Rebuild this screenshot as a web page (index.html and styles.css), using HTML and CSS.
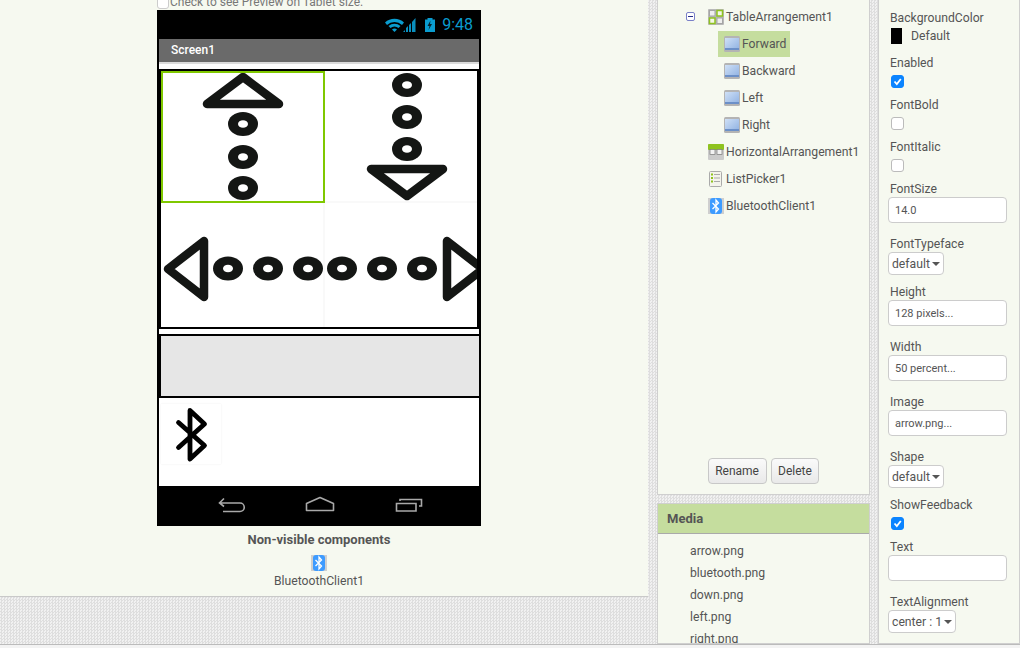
FILE: index.html
```html
<!DOCTYPE html>
<html lang="en">
<head>
  <meta charset="utf-8">
  <title>Designer</title>
  <link rel="stylesheet" href="styles.css">
</head>
<body>
<svg class="defs" width="0" height="0">
  <defs>
    <linearGradient id="btn-face" x1="0" y1="0" x2="1" y2="1">
      <stop offset="0" stop-color="#cfe0f6"/>
      <stop offset="1" stop-color="#8fb1e2"/>
    </linearGradient>
    <symbol id="ic-button" viewBox="0 0 16 16">
      <rect x="0" y="0" width="16" height="16" rx="1.500" fill="#b4b4b4"/>
      <rect x="1" y="2" width="14" height="12" fill="url(#btn-face)"/>
      <rect x="1" y="12" width="14" height="2" fill="#6c90c8"/>
    </symbol>
    <symbol id="ic-bt" viewBox="0 0 16 16">
      <rect width="16" height="16" fill="#cfcfcf"/>
      <rect x="2" y="0" width="12" height="16" rx="3" fill="#3d9bff"/>
      <path d="M4.500 5l6 6-2.500 3V2l2.500 3-6 6" fill="none" stroke="#fff" stroke-width="1.300"/>
    </symbol>
  </defs>
</svg>

<div class="main">
  <div class="viewer">
    <div class="tablet-check"><span class="tablet-box"></span>Check to see Preview on Tablet size.</div>
    <div class="phone">
      <div class="status">
        <svg class="status-icons" width="52" height="16" viewBox="386 17 52 16">
          <path d="M386 22.500a14 14 0 0 1 19 0l-2 2.500a11 11 0 0 0-15 0z" fill="#0a9ccf"/>
          <path d="M389.500 26a9 9 0 0 1 12 0l-2 2a6 6 0 0 0-8 0z" fill="#0a9ccf"/>
          <path d="M393 29.500a4 4 0 0 1 5 0l-2.500 2.500z" fill="#0a9ccf"/>
          <path d="M404 32l2-2v2zM407 32v-4l2-2v6zM410 32v-7l2-2v9zM413 32v-10l3.500-4v14z" fill="#0a8fbe"/>
          <path d="M428.500 18h5v1.500h2.500v12.500h-10v-12.500h2.500z" fill="#0a9ccf"/>
          <path d="M431.500 20.500l-3 5.500h2l-1 4 3.500-6h-2z" fill="#04232e"/>
        </svg>
        <span class="clock">9:48</span>
      </div>
      <div class="titlebar">Screen1</div>
      <div class="screen">
        <div class="table-arr">
          <div class="cell cell-sel">
            <svg class="art" width="164" height="132" viewBox="161 71 164 132">
              <polygon class="tri" points="207,104 279,104 243,77"/>
              <ellipse class="dot" cx="243" cy="124" rx="15" ry="12"/><ellipse class="hole" cx="243" cy="124" rx="5" ry="3.800"/>
              <ellipse class="dot" cx="243" cy="157" rx="15" ry="12"/><ellipse class="hole" cx="243" cy="157" rx="5" ry="3.800"/>
              <ellipse class="dot" cx="243" cy="188" rx="15" ry="12"/><ellipse class="hole" cx="243" cy="188" rx="5" ry="3.800"/>
            </svg>
          </div>
          <div class="cell cell-top">
            <svg class="art" width="152" height="132" viewBox="325 71 152 132">
              <ellipse class="dot" cx="407" cy="85" rx="15" ry="12"/><ellipse class="hole" cx="407" cy="85" rx="5" ry="3.800"/>
              <ellipse class="dot" cx="407" cy="117" rx="15" ry="12"/><ellipse class="hole" cx="407" cy="117" rx="5" ry="3.800"/>
              <ellipse class="dot" cx="407" cy="149" rx="15" ry="12"/><ellipse class="hole" cx="407" cy="149" rx="5" ry="3.800"/>
              <polygon class="tri" points="371,169 443,169 407,196"/>
            </svg>
          </div>
          <div class="cell cell-left">
            <svg class="art" width="164" height="124" viewBox="161 203 164 124">
              <polygon class="tri" points="204,241 204,297 168,269"/>
              <ellipse class="dot" cx="228" cy="268.500" rx="15" ry="12"/><ellipse class="hole" cx="228" cy="268.500" rx="5" ry="3.800"/>
              <ellipse class="dot" cx="268" cy="268.500" rx="15" ry="12"/><ellipse class="hole" cx="268" cy="268.500" rx="5" ry="3.800"/>
              <ellipse class="dot" cx="308" cy="268.500" rx="15" ry="12"/><ellipse class="hole" cx="308" cy="268.500" rx="5" ry="3.800"/>
            </svg>
          </div>
          <div class="cell">
            <svg class="art" width="152" height="124" viewBox="325 203 152 124">
              <ellipse class="dot" cx="342" cy="268.500" rx="15" ry="12"/><ellipse class="hole" cx="342" cy="268.500" rx="5" ry="3.800"/>
              <ellipse class="dot" cx="382" cy="268.500" rx="15" ry="12"/><ellipse class="hole" cx="382" cy="268.500" rx="5" ry="3.800"/>
              <ellipse class="dot" cx="422" cy="268.500" rx="15" ry="12"/><ellipse class="hole" cx="422" cy="268.500" rx="5" ry="3.800"/>
              <polygon class="tri" points="447,241 447,297 483,269"/>
            </svg>
          </div>
        </div>
        <div class="horiz-arr"></div>
        <div class="bt-image">
          <svg width="60" height="60" viewBox="161 404 60 60">
            <path d="M178.500 422.500L204.500 445.500 190 459V410.500L204.500 424 178.500 447.500" fill="none" stroke="#000" stroke-width="4.800" stroke-linecap="round" stroke-linejoin="round"/>
          </svg>
        </div>
      </div>
      <div class="navbar">
        <svg width="320" height="40" viewBox="159 486 320 40" fill="none" stroke="#a9a9a9" stroke-width="1.600">
          <path d="M219.500 503h20.500a4 4 0 0 1 0 8.500h-17M224 498.500l-4.500 4.500 4.500 3.500"/>
          <path d="M306.500 510.500v-7l13.500-6 13.500 6v7z" stroke-linejoin="round"/>
          <path d="M396.500 503.500h19.500v7.500h-19.500zM400 501v-1.500h21.500v6.500h-2.500"/>
        </svg>
      </div>
    </div>
    <div class="nonvis-title">Non-visible components</div>
    <div class="nonvis-item">
      <svg class="nonvis-icon" width="16" height="16"><use href="#ic-bt"/></svg>
      <div class="nonvis-name">BluetoothClient1</div>
    </div>
  </div>

  <div class="middle">
    <div class="tree panel">
      <div class="tree-row tree-parent">
        <span class="minus"></span>
        <svg class="tree-icon" width="16" height="16" viewBox="0 0 16 16">
          <rect width="16" height="16" rx="1" fill="#b9b9b9"/>
          <rect x="1.500" y="1.500" width="5.500" height="5.500" fill="#efefef" stroke="#a5a5a5"/>
          <rect x="9" y="1.500" width="5.500" height="5.500" fill="#f4f8e8" stroke="#8fc31f" stroke-width="1.500"/>
          <rect x="1.500" y="9" width="5.500" height="5.500" fill="#f4f8e8" stroke="#8fc31f" stroke-width="1.500"/>
          <rect x="9" y="9" width="5.500" height="5.500" fill="#efefef" stroke="#a5a5a5"/>
        </svg>
        TableArrangement1
      </div>
      <div class="tree-row tree-child"><span class="tree-sel">
        <svg class="tree-icon" width="16" height="16"><use href="#ic-button"/></svg>Forward</span></div>
      <div class="tree-row tree-child"><span class="tree-item">
        <svg class="tree-icon" width="16" height="16"><use href="#ic-button"/></svg>Backward</span></div>
      <div class="tree-row tree-child"><span class="tree-item">
        <svg class="tree-icon" width="16" height="16"><use href="#ic-button"/></svg>Left</span></div>
      <div class="tree-row tree-child"><span class="tree-item">
        <svg class="tree-icon" width="16" height="16"><use href="#ic-button"/></svg>Right</span></div>
      <div class="tree-row tree-top">
        <svg class="tree-icon" width="16" height="16" viewBox="0 0 16 16">
          <rect width="16" height="16" rx="1" fill="#cbcbcb"/>
          <rect width="16" height="6" rx="1" fill="#8fc31f"/>
          <rect x="2" y="5.500" width="5" height="5" fill="#f2f2f2" stroke="#777" stroke-width=".7"/>
          <rect x="9" y="5.500" width="5" height="5" fill="#f2f2f2" stroke="#777" stroke-width=".7"/>
        </svg>
        HorizontalArrangement1
      </div>
      <div class="tree-row tree-top">
        <svg class="tree-icon" width="16" height="16" viewBox="0 0 16 16">
          <rect x="1.500" y="0.500" width="12" height="15" rx="1" fill="#f4f4ec" stroke="#aaa"/>
          <path d="M3 3.500h2M3 7h2M3 10.500h2" stroke="#8fc31f" stroke-width="2"/>
          <path d="M6 3.500h6M6 7h6M6 10.500h6" stroke="#aaa"/>
        </svg>
        ListPicker1
      </div>
      <div class="tree-row tree-top">
        <svg class="tree-icon" width="16" height="16"><use href="#ic-bt"/></svg>
        BluetoothClient1
      </div>
      <div class="tree-buttons">
        <div class="btn">Rename</div>
        <div class="btn">Delete</div>
      </div>
    </div>
    <div class="media panel">
      <div class="media-head">Media</div>
      <div class="media-list">
        <div class="media-item">arrow.png</div>
        <div class="media-item">bluetooth.png</div>
        <div class="media-item">down.png</div>
        <div class="media-item">left.png</div>
        <div class="media-item">right.png</div>
      </div>
    </div>
  </div>

  <div class="props panel">
    <div class="prop-label">BackgroundColor</div>
    <div class="prop-color"><span class="swatch"></span>Default</div>
    <div class="prop-label">Enabled</div>
    <div class="check check-on"><svg width="13" height="13" viewBox="0 0 13 13"><path d="M3.500 6.500l2.300 2.500 4-5" fill="none" stroke="#fff" stroke-width="1.800"/></svg></div>
    <div class="prop-label">FontBold</div>
    <div class="check"></div>
    <div class="prop-label">FontItalic</div>
    <div class="check"></div>
    <div class="prop-label">FontSize</div>
    <div class="field">14.0</div>
    <div class="prop-label">FontTypeface</div>
    <div class="choice">default<span class="caret"></span></div>
    <div class="prop-label">Height</div>
    <div class="field">128 pixels...</div>
    <div class="prop-label">Width</div>
    <div class="field">50 percent...</div>
    <div class="prop-label">Image</div>
    <div class="field">arrow.png...</div>
    <div class="prop-label">Shape</div>
    <div class="choice">default<span class="caret"></span></div>
    <div class="prop-label">ShowFeedback</div>
    <div class="check check-on"><svg width="13" height="13" viewBox="0 0 13 13"><path d="M3.500 6.500l2.300 2.500 4-5" fill="none" stroke="#fff" stroke-width="1.800"/></svg></div>
    <div class="prop-label">Text</div>
    <div class="field"></div>
    <div class="prop-label">TextAlignment</div>
    <div class="choice">center : 1<span class="caret"></span></div>
  </div>
</div>
<div class="strip"></div>
</body>
</html>
```

FILE: styles.css
```css
html, body { margin: 0; padding: 0; height: 648px; overflow: hidden; }
body {
  font-family: Roboto, "Liberation Sans", sans-serif;
  font-size: 12.200px;
  color: #555;
  background: #e9e9e9 repeating-conic-gradient(#dedede 0 25%, #f1f1f1 0 50%) 0 0 / 3px 3px;
}
.defs { display: block; height: 0; }

.main { display: flex; height: 644px; }
.strip { height: 4px; background: #f3f3f3; border-top: 1px solid #bbb; box-sizing: border-box; }

.panel { background: #f6f9f0; box-sizing: border-box; border: 1px solid #cfcfcf; border-top: 0; }

/* viewer */
.viewer {
  width: 648px;
  height: 597px;
  flex: none;
  margin-right: 9px;
  background: #f6f9f0;
  border-bottom: 1px solid #c9c9c9;
  box-sizing: border-box;
  overflow: hidden;
}
.tablet-check {
  display: flex;
  align-items: center;
  height: 15px;
  margin: -5px 0 0 157px;
  line-height: 15px;
  font-size: 12px;
  color: #777;
}
.tablet-box {
  width: 10px;
  height: 10px;
  margin-right: 1px;
  background: #fff;
  border: 1px solid #ccc;
  border-radius: 3px;
}

.phone {
  width: 324px;
  margin-left: 157px;
  box-sizing: border-box;
  padding: 0 2px;
  background: #000;
}
.status { display: flex; justify-content: flex-end; align-items: center; height: 29px; padding-right: 6px; }
.status-icons { margin-right: 5px; }
.clock { font-size: 16px; color: #0a9ccf; line-height: 29px; }
.titlebar {
  height: 23px;
  line-height: 22px;
  padding-left: 12px;
  background: #6a6a6a;
  border-bottom: 2px solid #dcdcdc;
  color: #fff;
  font-size: 12px;
  font-weight: 500;
}
.screen { background: #fff; padding-top: 5px; height: 422px; box-sizing: border-box; overflow: hidden; }
.navbar { height: 40px; background: #000; }
.navbar svg { display: block; }

.table-arr {
  display: grid;
  grid-template-columns: 164px 152px;
  grid-template-rows: 132px 124px;
  border: 2px solid #000;
}
.cell { overflow: hidden; box-sizing: border-box; position: relative; }
.cell::after { content: ""; position: absolute; inset: 0; }
.cell-sel::after { box-shadow: inset 0 0 0 2px #7fc800; }
.cell-top::after { box-shadow: inset 0 -2px 0 #f9f9f9; }
.cell-left::after { box-shadow: inset -2px 0 0 #f9f9f9; }
.art { display: block; }
.tri { fill: none; stroke: #141614; stroke-width: 8.500; stroke-linejoin: round; }
.dot { fill: #141614; }
.hole { fill: #fff; }

.horiz-arr {
  height: 60px;
  margin-top: 5px;
  background: #e6e6e6;
  border: 2px solid #000;
  border-right: 0;
}
.bt-image { width: 60px; height: 60px; margin: 6px 0 0 2px; box-shadow: 0 0 2px #eee; }
.bt-image svg { display: block; }

.nonvis-title { margin: 6px 0 0 157px; width: 324px; text-align: center; line-height: 16px; font-size: 13px; font-weight: 700; }
.nonvis-item { width: 324px; margin: 7px 0 0 157px; text-align: center; }
.nonvis-icon { display: block; margin: 0 auto; }
.nonvis-name { line-height: 20px; }

/* tree and media */
.middle { display: flex; flex-direction: column; width: 213px; flex: none; margin-right: 8px; }
.tree { display: flex; flex-direction: column; height: 495px; padding-top: 3px; }
.tree-row { display: flex; align-items: center; height: 27px; flex: none; }
.tree-parent { padding-left: 28px; }
.tree-top { padding-left: 50px; }
.tree-child { padding-left: 60px; }
.minus {
  width: 7px;
  height: 7px;
  margin-right: 13px;
  border: 1px solid #7a80c8;
  border-radius: 2px;
  background: #fff linear-gradient(#2a2f8a, #2a2f8a) center / 5px 1px no-repeat;
}
.tree-icon { flex: none; margin-right: 2px; }
.tree-sel, .tree-item { display: flex; align-items: center; height: 26px; padding: 0 4px 0 6px; }
.tree-sel { background: #c5dd9e; }
.tree-buttons { display: flex; justify-content: center; gap: 4px; margin-top: auto; padding-bottom: 10px; }
.btn {
  height: 24px;
  line-height: 24px;
  padding: 0 6.500px;
  font-size: 12px;
  color: #444;
  background: linear-gradient(#fafafa, #e9e9e9);
  border: 1px solid #c8c8c8;
  border-radius: 4px;
}

.media { flex: 1; margin-top: 8px; overflow: hidden; border-top: 1px solid #cfcfcf; }
.media-head {
  height: 29px;
  line-height: 29px;
  padding-left: 9px;
  background: #c5dd9e;
  border-bottom: 1px solid #aaa;
  font-size: 13px;
  font-weight: 700;
}
.media-list { padding: 6px 0 0 32px; }
.media-item { line-height: 22px; }

/* properties */
.props { width: 142px; flex: none; height: 644px; padding: 8px 0 0 9px; overflow: hidden; }
.prop-label { height: 18px; line-height: 20px; margin-left: 2px; white-space: nowrap; }
.prop-color { display: flex; align-items: center; height: 16px; margin: 2px 0 9px 3px; line-height: 14px; }
.swatch { width: 11px; height: 16px; margin-right: 9px; background: #000; }
.check {
  width: 13px;
  height: 13px;
  margin: 4px 0 7px 3px;
  box-sizing: border-box;
  background: #fff;
  border: 1px solid #bbb;
  border-radius: 3px;
}
.check svg { display: block; margin: -1px; }
.check-on { background: #0b84ff; border-color: #0b84ff; }
.field {
  width: 119px;
  height: 26px;
  line-height: 25px;
  margin-bottom: 11px;
  padding: 0 6px;
  box-sizing: border-box;
  font-size: 11px;
  background: #fff;
  border: 1px solid #ccc;
  border-radius: 4px;
}
.choice {
  display: inline-flex;
  align-items: center;
  height: 23px;
  padding: 0 3px;
  margin-bottom: 7px;
  box-sizing: border-box;
  vertical-align: top;
  background: #fff;
  border: 1px solid #ccc;
  border-radius: 4px;
}
.caret {
  width: 0;
  height: 0;
  margin-left: 2px;
  border: 4px solid transparent;
  border-top-color: #555;
  border-bottom: 0;
}
```
